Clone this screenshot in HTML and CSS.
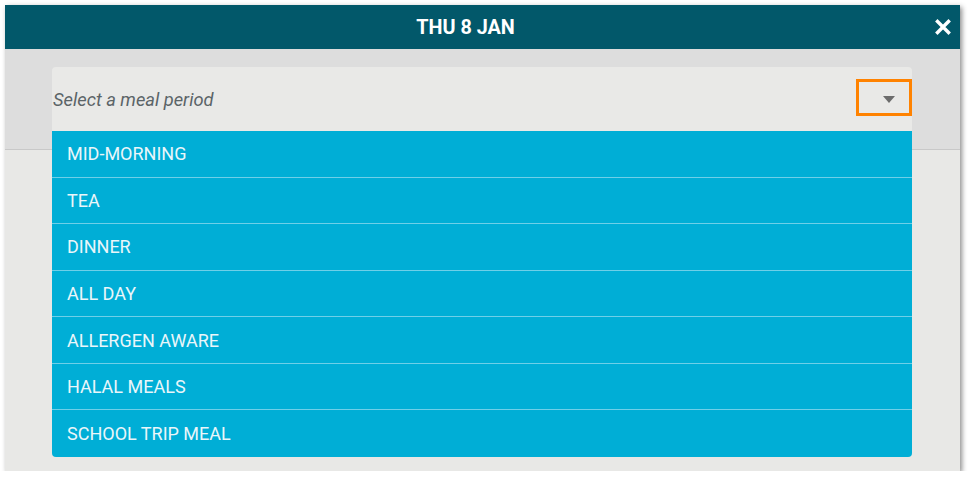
FILE: index.html
```html
<!DOCTYPE html>
<html lang="en">
<head>
<meta charset="utf-8">
<title>Meal period</title>
<link rel="stylesheet" href="styles.css">
</head>
<body>
<div class="dialog">
  <div class="header">
    <span class="title">THU 8 JAN</span>
    <span class="close" aria-label="Close">
      <svg width="16" height="16" viewBox="0 0 16 16"><path d="M2.5 2.5 L13.5 13.5 M13.5 2.5 L2.5 13.5" stroke="#ffffff" stroke-width="3.4" stroke-linecap="square"/></svg>
    </span>
  </div>
  <div class="body">
    <div class="band">
      <div class="select">
        <span class="placeholder">Select a meal period</span>
        <span class="toggle"><span class="caret"></span></span>
      </div>
    </div>
    <ul class="menu">
      <li>MID-MORNING</li>
      <li>TEA</li>
      <li>DINNER</li>
      <li>ALL DAY</li>
      <li>ALLERGEN AWARE</li>
      <li>HALAL MEALS</li>
      <li>SCHOOL TRIP MEAL</li>
    </ul>
  </div>
</div>
</body>
</html>
```

FILE: styles.css
```css
html, body {
  margin: 0;
  padding: 0;
  background: #ffffff;
  font-family: Roboto, "Liberation Sans", sans-serif;
}

.dialog {
  margin: 5px 0 0 5px;
  width: 955px;
  height: 466px;
  background: #e8e8e6;
  box-shadow: 2px 2px 5px rgba(0, 0, 0, 0.45);
  display: flex;
  flex-direction: column;
}

.header {
  height: 44px;
  flex: none;
  background: #02586a;
  display: flex;
  align-items: center;
  justify-content: center;
  position: relative;
  padding-right: 34px;
}

.title {
  color: #ffffff;
  font-weight: 700;
  font-size: 19.8px;
}

.close {
  position: absolute;
  right: 9px;
  top: 14px;
  width: 16px;
  height: 16px;
  display: flex;
}

.body {
  position: relative;
  flex: 1;
}

.band {
  background: #dddddd;
  padding: 18px 48px 18px 47px;
  border-bottom: 1px solid #c8c8c8;
}

.select {
  height: 64px;
  background: #e9e9e7;
  border-radius: 4px 4px 0 0;
  display: flex;
  align-items: center;
  justify-content: space-between;
  padding-left: 1px;
}

.placeholder {
  font-style: italic;
  font-size: 18.3px;
  color: #5b6467;
}

.toggle {
  align-self: flex-start;
  margin-top: 12px;
  width: 56px;
  height: 37px;
  box-sizing: border-box;
  border: 3px solid #ff8200;
  display: flex;
  align-items: center;
  justify-content: center;
  padding-left: 9px;
  padding-top: 3px;
}

.caret {
  width: 0;
  height: 0;
  border-left: 6.5px solid transparent;
  border-right: 6.5px solid transparent;
  border-top: 7px solid #6c6c6c;
}

.menu {
  position: absolute;
  top: 82px;
  left: 47px;
  width: 860px;
  margin: 0;
  padding: 0;
  list-style: none;
  background: #00aed6;
  border-radius: 0 0 4px 4px;
  overflow: hidden;
}

.menu li {
  height: 46.57px;
  box-sizing: border-box;
  display: flex;
  align-items: center;
  padding-left: 15px;
  font-size: 18px;
  color: #eaf6fa;
  border-bottom: 1px solid #6fcfe8;
}

.menu li:last-child {
  border-bottom: none;
}
```
